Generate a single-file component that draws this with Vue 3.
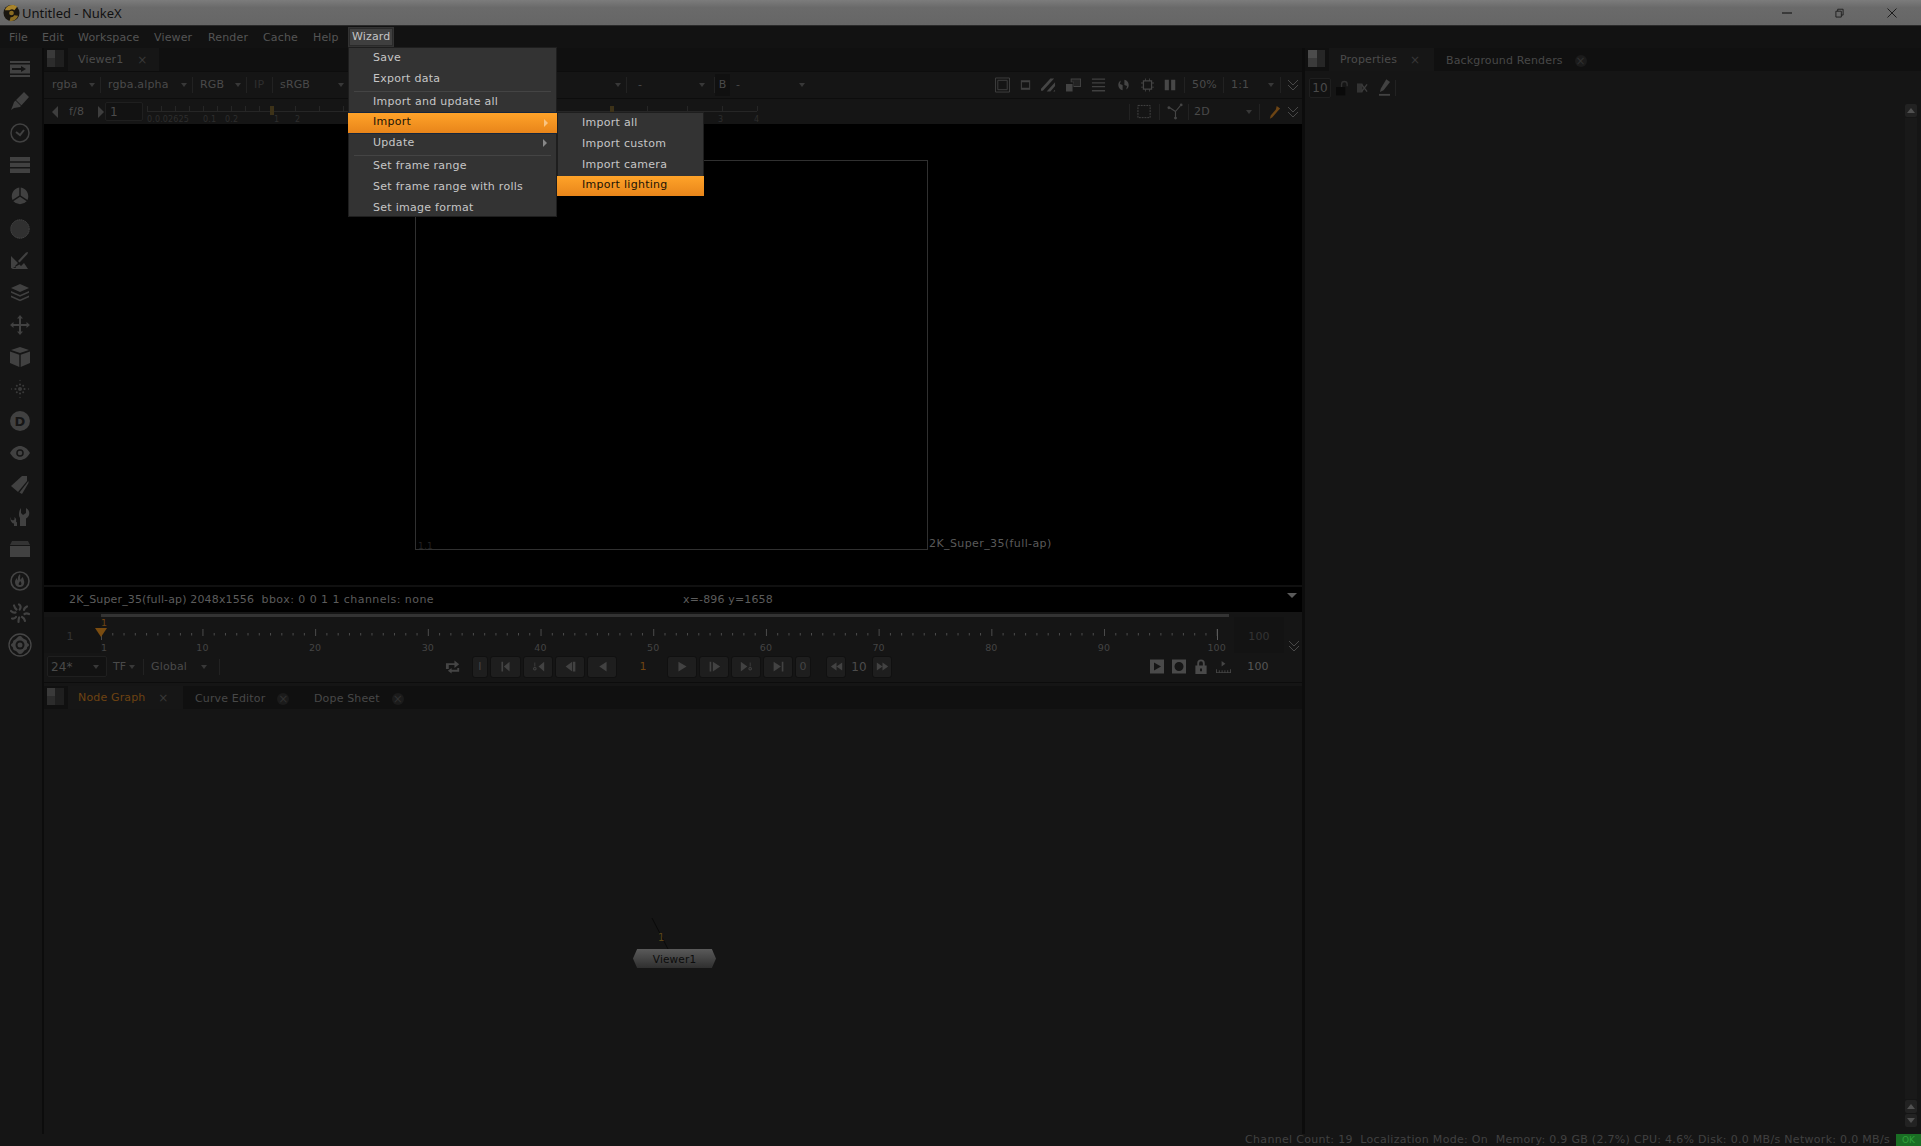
<script setup>
const menuBar = ['File', 'Edit', 'Workspace', 'Viewer', 'Render', 'Cache', 'Help']
const menuWidths = [33, 36, 76, 54, 55, 50, 39]

const ticks = Array.from({ length: 100 }, (_, i) => ({
  x: i * 11.27,
  major: i === 0 || (i + 1) % 10 === 0
}))
const labels = [1, 10, 20, 30, 40, 50, 60, 70, 80, 90, 100].map((f) => ({
  f,
  x: (f - 1) * 11.27 + (f === 1 ? 3 : 0)
}))

const zoomTicks = [0, 14, 28, 42, 56, 70, 84, 98, 112, 124, 148, 172, 196, 238, 300, 380, 465, 500, 540, 575, 610]
const zoomLabels = [
  { t: '0.0.02625', x: 0 },
  { t: '0.1', x: 56 },
  { t: '0.2', x: 78 },
  { t: '1', x: 127 },
  { t: '2', x: 148 },
  { t: '3', x: 571 },
  { t: '4', x: 607 }
]

const backButtons = [
  { w: 31, d: 'M3 2h2v12H3z M13 2v12L6 8z' },
  { w: 30, d: 'M8 8l7-6v12z M3 3h1v5H3z M3.5 8.500a2.200 2.200 0 1 1 0 4.400a2.200 2.200 0 1 1 0-4.400z M3.500 9.700a1 1 0 1 0 0 2a1 1 0 1 0 0-2z' },
  { w: 30, d: 'M2 8l8-6v12z M11 2h3v12h-3z' },
  { w: 30, d: 'M4 8l9-6v12z' }
]
const fwdButtons = [
  { w: 30, d: 'M3 2l10 6-10 6z' },
  { w: 30, d: 'M2 2h2v12H2z M6 2l9 6-9 6z' },
  { w: 30, d: 'M1 2l8 6-8 6z M12 3h1v5h-1z M12.500 8.500a2.200 2.200 0 1 1 0 4.400a2.200 2.200 0 1 1 0-4.400z M12.500 9.700a1 1 0 1 0 0 2a1 1 0 1 0 0-2z' },
  { w: 30, d: 'M2 2l9 6-9 6z M12 2h2v12h-2z' }
]
</script>

<template>
  <div class="app">
    <header class="titlebar">
      <svg class="logo" viewBox="0 0 18 18">
        <circle cx="9" cy="9" r="8.500" fill="#1a1610" />
        <path d="M2 6a8 8 0 0 1 13-3.500L12 6a4 4 0 0 0-5 0z" fill="#a8842c" />
        <path d="M16 12a8 8 0 0 1-9 5.500l1-4a4 4 0 0 0 4-2z" fill="#8a6c22" />
        <circle cx="9" cy="9" r="2.500" fill="#8a6c22" />
      </svg>
      <span class="title">Untitled - NukeX</span>
      <div class="winctl">
        <svg class="win-min" viewBox="0 0 10 10"><path d="M0 5h10" stroke="#1c1c1c" stroke-width="1.200" /></svg>
        <svg class="win-max" viewBox="0 0 10 10"><path d="M1 3h6v6.500H1z M3 3V.8h6v6.500H7" fill="none" stroke="#1c1c1c" stroke-width="1" /></svg>
        <svg class="win-close" viewBox="0 0 10 10"><path d="M.5.5l9 9M9.500.5l-9 9" stroke="#1c1c1c" stroke-width="1" /></svg>
      </div>
    </header>

    <nav class="menubar">
      <span v-for="(m, i) in menuBar" :key="m" class="menubar-item" :style="{ width: menuWidths[i] + 'px' }">{{ m }}</span>
      <span class="menubar-item is-open">Wizard</span>
    </nav>

    <div class="workspace">
      <aside class="sidebar">
        <svg viewBox="0 0 20 16" class="sb"><path d="M0 0h20v2H0z M0 3.500h20v9H0z M0 14h20v2H0z" /><path d="M2 7h9V5l5 3-5 3V9H2z" fill="#151515" /></svg>
        <svg viewBox="0 0 20 20" class="sb"><path d="M14 1l5 5-9 10-6 1-3 2 2-5 1-3z" /><path d="M5.500 9l6 6" stroke="#151515" stroke-width="1" /></svg>
        <svg viewBox="0 0 20 20" class="sb"><circle cx="10" cy="10" r="9" fill="none" stroke="#414141" stroke-width="1.500" /><path d="M6 9l4 3 4-5" fill="none" stroke="#414141" stroke-width="2" /></svg>
        <svg viewBox="0 0 20 16" class="sb"><path d="M0 0h20v4.200H0z M0 5.800h20V10H0z M0 11.600h20V16H0z" /></svg>
        <svg viewBox="0 0 20 20" class="sb"><path d="M9.300.5v8L2.500 13A9 9 0 0 1 9.300.5z M10.700.5a9 9 0 0 1 6.800 12.500l-6.800-4.500z M3.300 14.300l6.700-4.500 6.700 4.500a9 9 0 0 1-13.400 0z" /></svg>
        <svg viewBox="0 0 20 20" class="sb"><circle cx="10" cy="10" r="9.200" fill="#303030" stroke="#484848" stroke-width="1" stroke-dasharray="1.500 .5" /></svg>
        <svg viewBox="0 0 20 20" class="sb"><path d="M1 5l7 7-3 3 1 2h-5z M1 18h17L14 12l-3 3-1.500-1.500z" /><path d="M8 10l8-8.500 2-.5-.5 2-8 8.500z" /></svg>
        <svg viewBox="0 0 20 18" class="sb"><path d="M10 0l9 4-9 4-9-4z M1 7l9 4 9-4v1.800l-9 4-9-4z M1 11.500l9 4 9-4v1.800l-9 4-9-4z" /></svg>
        <svg viewBox="0 0 20 20" class="sb"><path d="M10 0l3 3.500h-2V9h5.500V7L20 10l-3.500 3v-2H11v5.500h2L10 20l-3-3.500h2V11H3.500v2L0 10l3.500-3v2H9V3.500H7z" /></svg>
        <svg viewBox="0 0 20 20" class="sb"><path d="M10 0l9 3-9 3-9-3z" /><path d="M0 4.500l9.300 3.200V20L0 16z" /><path d="M20 4.500l-9.300 3.200V20L20 16z" /></svg>
        <svg viewBox="0 0 20 20" class="sb"><g fill="#3a3a3a"><circle cx="10" cy="10" r="2" /><circle cx="10" cy="5.500" r="1.100" /><circle cx="10" cy="14.500" r="1.100" /><circle cx="5.500" cy="10" r="1.100" /><circle cx="14.500" cy="10" r="1.100" /><circle cx="6.800" cy="6.800" r="1" /><circle cx="13.200" cy="6.800" r="1" /><circle cx="6.800" cy="13.200" r="1" /><circle cx="13.200" cy="13.200" r="1" /><circle cx="10" cy="1.500" r=".7" /><circle cx="10" cy="18.500" r=".7" /><circle cx="1.500" cy="10" r=".7" /><circle cx="18.500" cy="10" r=".7" /></g></svg>
        <svg viewBox="0 0 20 20" class="sb"><circle cx="10" cy="10" r="10" /><text x="10" y="15" text-anchor="middle" class="sb-d">D</text></svg>
        <svg viewBox="0 0 20 14" class="sb"><path d="M0 7C3 2 6.500 0 10 0s7 2 10 7c-3 5-6.500 7-10 7S3 12 0 7z" /><circle cx="10" cy="7" r="3.800" fill="#151515" /><circle cx="10" cy="7" r="2.300" /></svg>
        <svg viewBox="0 0 20 20" class="sb"><path d="M12 1h5v5L8 17 1 11z" /><path d="M18.500 6v2L12 19l-2.500-1.500z" /></svg>
        <svg viewBox="0 0 20 20" class="sb"><path d="M11 1v5l2 2 3-2V1c2.500 1.500 4 4 3 7-.5 2-2 3-3 3.500V19h-6v-8C8.500 9 8.500 4 11 1z" /><path d="M1 10v2.500l2 1 1.500-1V10c1.500 1 2 3 1.500 4.500l1 1V19H4v-2.500C1.500 16.500-.5 12.500 1 10z" /></svg>
        <svg viewBox="0 0 20 16" class="sb"><path d="M2 0h16l2 4H0z" fill="#333" /><path d="M0 5h20v11H0z" /></svg>
        <svg viewBox="0 0 20 20" class="sb"><circle cx="10" cy="10" r="9" fill="none" stroke="#444" stroke-width="1.600" /><path d="M10 3c1 3-1 4 1 6 0-2 1-2 2-3 0 2 2 4 1 7-.5 2-2 3-4 3-3 0-5-2-5-5 0-2 1-3 2-4 0 1.500.5 2 1 2.500C7.500 7 8 5 10 3z" /><path d="M10 9.500c0 2-2 2.500-1 4.500h2c1.200-2-.5-3-1-4.500z" fill="#151515" /></svg>
        <svg viewBox="0 0 20 20" class="sb"><g fill="none" stroke="#414141" stroke-width="2.200" stroke-linecap="round"><path d="M9 1.500c2 1 2 3 .7 5" /><path d="M17 3.500c-2 1-3 1.800-3 3.500" /><path d="M19 11c-2-1-3-1-4.500 0" /><path d="M15 18c-.5-2-1-3-3-4" /><path d="M8.500 19c0-2 0-3 .7-4.500" /><path d="M2 15.500c2 .5 3 0 4-1.500" /><path d="M1 8c1.500 1.500 3 2 4.500 1.500" /><path d="M4 2.500c.5 1.500 1 3 2.500 4" /></g></svg>
        <svg viewBox="0 0 24 24" class="sb sb-big"><circle cx="12" cy="12" r="11" fill="none" stroke="#464646" stroke-width="1.300" /><path d="M12 3c2 0 2 2 4 3s3 1 3 3 2 1 2 3-2 1-2 3-2 1.500-3 3-2 3-4 3-2-2-4-3-3-1-3-3-2-1-2-3 2-1 2-3 2-2 3-3 2-3 4-3z" /><circle cx="12" cy="12" r="4.500" fill="#151515" /><circle cx="12" cy="12" r="2.500" /></svg>
      </aside>

      <div class="center">
        <section class="viewer-pane">
          <div class="tabbar">
            <div class="panel-ico"></div>
            <div class="tab tab-active tab-viewer"><span>Viewer1</span><i class="close">×</i></div>
          </div>

          <div class="toolbar tb-one">
            <div class="tbi tbi-rgba">rgba<b class="caret"></b></div>
            <div class="tbi tbi-alpha">rgba.alpha<b class="caret"></b></div>
            <div class="tbi tbi-rgb">RGB<b class="caret"></b></div>
            <div class="tbi tbi-ip dim">IP</div>
            <div class="tbi tbi-srgb">sRGB<b class="caret"></b></div>
            <div class="tbi tbi-hidden"><b class="caret"></b></div>
            <div class="tbi tbi-dash">-<b class="caret"></b></div>
            <div class="bbox">B</div>
            <div class="tbi tbi-dash2">-<b class="caret"></b></div>
            <div class="tb-right">
              <div class="ti-group">
                <svg viewBox="0 0 16 16" class="ti"><path d="M.5.5h15v15H.5z M3 3h10v10H3z" fill="none" stroke="#404040" /></svg>
                <svg viewBox="0 0 16 16" class="ti ti-n"><path d="M2 2h12v12H2z" fill="none" stroke="#404040" stroke-width="1.500" /><path d="M2 2h12v2H2z M2 12h12v2H2z" fill="#404040" /></svg>
                <svg viewBox="0 0 16 16" class="ti"><path d="M0 12L10 1h4L2 14H0z M6 15L15 5v4l-5 6z M13 15l2-2v2z" fill="#454545" /></svg>
                <svg viewBox="0 0 16 16" class="ti"><path d="M5 1h11v9H8V5H5z M0 7h7v8H0z" fill="#434343" /><path d="M6 2h9v7H8.500V4.500H6z" fill="#232323" /></svg>
                <svg viewBox="0 0 16 16" class="ti"><path d="M1 1h14v1.400H1z M1 5h14v1.400H1z M1 9h14v1.400H1z M1 13.400h14v1.400H1z" fill="#404040" /></svg>
                <svg viewBox="0 0 16 18" class="ti"><path d="M9 0v3a6 6 0 0 1 2 11l1-4-3-1zM7 18v-3A6 6 0 0 1 5 4L4 8l3 1z" fill="#454545" /></svg>
                <svg viewBox="0 0 16 16" class="ti ti-c"><path d="M3 3h10v10H3z" fill="none" stroke="#454545" stroke-width="1.500" /><path d="M5 0h1v3H5z M10 0h1v3h-1z M5 13h1v3H5z M10 13h1v3h-1z M0 5h3v1H0z M0 10h3v1H0z M13 5h3v1h-3z M13 10h3v1h-3z" fill="#454545" /></svg>
                <svg viewBox="0 0 16 16" class="ti ti-p"><path d="M1 1h5.500v14H1z M9.500 1H15v14H9.500z" fill="#474747" /></svg>
              </div>
              <span class="tsep sep-a"></span>
              <span class="tlabel t-50">50%</span>
              <span class="tsep"></span>
              <span class="tlabel t-11">1:1<b class="caret"></b></span>
              <span class="tsep"></span>
              <span class="chev"></span>
            </div>
          </div>

          <div class="toolbar tb-two">
            <b class="tri-left"></b>
            <span class="fstop">f/8</span>
            <b class="tri-right"></b>
            <span class="field field-gain">1</span>
            <svg class="gain-ruler" viewBox="0 0 612 26">
              <path d="M0 12.500H610" stroke="#262626" />
              <path v-for="t in zoomTicks" :key="t" :d="`M${t + .5} 7v5`" stroke="#262626" />
              <rect x="123" y="7" width="4" height="9" fill="#3d3218" />
              <rect x="463" y="7" width="4" height="9" fill="#3d3218" />
              <text v-for="l in zoomLabels" :key="l.t" :x="l.x" y="23" class="gain-label">{{ l.t }}</text>
            </svg>
            <div class="tb-right tb-right-two">
              <span class="tsep"></span>
              <svg viewBox="0 0 16 16" class="ti t2-dash"><path d="M1 1h13v13H1z" fill="none" stroke="#454545" stroke-dasharray="2 1" /></svg>
              <span class="tsep t2-s2"></span>
              <svg viewBox="0 0 18 18" class="ti ti-w"><path d="M9 9L3 5M9 9l5-6M9 9v7" stroke="#454545" stroke-width="1.200" fill="none" /><circle cx="2" cy="5" r="1.500" fill="#454545" /><circle cx="15" cy="2" r="1.500" fill="#454545" /><circle cx="9" cy="16" r="1.500" fill="#454545" /></svg>
              <span class="tsep t2-s3"></span>
              <span class="tlabel t-2d">2D<b class="caret"></b></span>
              <span class="tsep"></span>
              <svg viewBox="0 0 14 16" class="ti ti-e"><path d="M9 1l4 3-3 3-6 7-3 2 1-4 6-7z" fill="#6c4414" /></svg>
              <span class="chev"></span>
            </div>
          </div>

          <div class="viewport">
            <div class="format">
              <span class="format-name">2K_Super_35(full-ap)</span>
              <span class="format-org">1,1</span>
            </div>
          </div>

          <div class="infobar">
            <span class="info-a">2K_Super_35(full-ap) 2048x1556&nbsp; <span class="info-tail">bbox: 0 0 1 1 channels: none</span></span>
            <span class="info-b">x=-896 y=1658</span>
            <b class="info-arrow"></b>
          </div>

          <div class="timeline">
            <div class="tl-bar"></div>
            <div class="tl-row">
              <div class="tl-start">1</div>
              <svg class="tl-ruler" viewBox="0 0 1133 36">
                <g v-for="t in ticks" :key="t.x">
                  <path :d="t.major ? `M${t.x + .5} 12v7` : `M${t.x + .5} 16v2.500`" stroke="#4c4c4c" />
                </g>
                <path d="M1116.500 12v11" stroke="#5a5a5a" />
                <path d="M.5 14v9" stroke="#4a4a4a" />
                <text v-for="l in labels" :key="l.f" :x="l.x" y="34" text-anchor="middle" class="tl-label">{{ l.f }}</text>
                <path d="M-6 11h12l-6 9z" fill="#7a4c10" />
                <text x="3" y="9" text-anchor="middle" class="tl-cur">1</text>
              </svg>
              <div class="tl-end">100</div>
              <span class="chev tl-chev"></span>
            </div>
            <div class="tl-controls">
              <div class="fps">24*<b class="caret"></b></div>
              <span class="tlabel t-tf">TF<b class="caret"></b></span>
              <span class="tsep"></span>
              <span class="tlabel t-global">Global<b class="caret"></b></span>
              <span class="tsep"></span>
              <svg class="loop" viewBox="0 0 18 16"><path d="M1 4h9V1l5 4-5 4V6H4v4H1zM15 9v4H7v2l-4-3 4-3v2h6V9z" fill="#454545" /></svg>
              <div class="tbtn btn-i">I</div>
              <div v-for="b in backButtons" :key="b.d" class="tbtn" :style="{ width: b.w + 'px' }">
                <svg viewBox="0 0 16 16"><path :d="b.d" fill-rule="evenodd" /></svg>
              </div>
              <div class="frame">1</div>
              <div v-for="b in fwdButtons" :key="b.d" class="tbtn" :style="{ width: b.w + 'px' }">
                <svg viewBox="0 0 16 16"><path :d="b.d" fill-rule="evenodd" /></svg>
              </div>
              <div class="tbtn btn-i">0</div>
              <div class="tbtn btn-skip first-skip"><svg viewBox="0 0 16 16"><path d="M1 8l7-5v10z M8 8l7-5v10z" /></svg></div>
              <div class="skip-val">10</div>
              <div class="tbtn btn-skip"><svg viewBox="0 0 16 16"><path d="M1 3l7 5-7 5z M8 3l7 5-7 5z" /></svg></div>
              <div class="tl-right-icons">
                <svg viewBox="0 0 14 14"><path d="M0 0h14v14H0z M4 3v8l7-4z" fill="#4a4a4a" fill-rule="evenodd" /></svg>
                <svg viewBox="0 0 14 14"><path d="M0 0h14v14H0z M7 2.500a4.500 4.500 0 1 0 0 9a4.500 4.500 0 1 0 0-9z" fill="#4a4a4a" fill-rule="evenodd" /></svg>
                <svg viewBox="0 0 14 16"><path d="M3 7V4.500a4 4 0 0 1 8 0V7h2v9H1V7z M5 7h4V4.500a2 2 0 0 0-4 0z M6 10v3h2v-3z" fill="#4a4a4a" fill-rule="evenodd" /></svg>
                <svg viewBox="0 0 16 14" class="in-icon"><path d="M6 1l4 3-4 3z M0 13h16v1H0z M0 10h1v3H0z M3 11h1v2H3z M6 11h1v2H6z M9 11h1v2H9z M12 11h1v2h-1z M15 10h1v3h-1z" fill="#454545" /></svg>
              </div>
              <div class="tl-out">100</div>
            </div>
          </div>
        </section>

        <section class="graph-pane">
          <div class="tabbar">
            <div class="panel-ico"></div>
            <div class="tab tab-active tab-ng"><span class="orange">Node Graph</span><i class="close">×</i></div>
            <div class="tab tab-ce"><span>Curve Editor</span><i class="close dark">×</i></div>
            <div class="tab tab-ds"><span>Dope Sheet</span><i class="close dark">×</i></div>
          </div>
          <div class="graph">
            <svg class="wire" viewBox="0 0 30 40"><path d="M1 0L17 31" stroke="#0a0a0a" stroke-width="1" /></svg>
            <span class="wire-num">1</span>
            <div class="node">Viewer1</div>
          </div>
        </section>
      </div>

      <aside class="props">
        <div class="tabbar">
          <div class="panel-ico light"></div>
          <div class="tab tab-active tab-props"><span>Properties</span><i class="close">×</i></div>
          <div class="tab tab-bg"><span>Background Renders</span><i class="close dark">×</i></div>
        </div>
        <div class="props-tools">
          <span class="field field-ten">10</span>
          <svg viewBox="0 0 14 16" class="ic-lock"><path d="M0 7h10v9H0z" fill="#0a0a0a" /><path d="M6 7V4a3 3 0 0 1 6 0v2" fill="none" stroke="#303030" stroke-width="1.500" /></svg>
          <svg viewBox="0 0 12 10" class="ic-x"><path d="M0 0h6v10H0z" fill="#333" /><path d="M5 1l6 8M11 1L5 9" stroke="#3c3c3c" stroke-width="1.500" /></svg>
          <svg viewBox="0 0 12 18" class="ic-pen"><path d="M8 0l4 3-7 9-4 2 1-4z" fill="#424242" /><path d="M0 16h12v2H0z" fill="#424242" /></svg>
          <span class="tsep"></span>
        </div>
        <div class="props-body">
          <div class="scroll">
            <div class="scroll-btn"><b class="up"></b></div>
            <div class="scroll-track"></div>
            <div class="scroll-btn"><b class="up"></b></div>
            <div class="scroll-btn"><b class="down"></b></div>
          </div>
        </div>
      </aside>
    </div>

    <footer class="statusbar">
      <span>Channel Count: 19&nbsp; Localization Mode: On&nbsp; Memory: 0.9 GB (2.7%) CPU: 4.6% Disk: 0.0 MB/s Network: 0.0 MB/s</span>
      <span class="ok">OK</span>
    </footer>

    <div class="menu menu-main">
      <div class="mi">Save</div>
      <div class="mi">Export data</div>
      <div class="msep"></div>
      <div class="mi">Import and update all</div>
      <div class="mi mi-on">Import<b class="mi-arrow light"></b></div>
      <div class="mi">Update<b class="mi-arrow"></b></div>
      <div class="msep"></div>
      <div class="mi">Set frame range</div>
      <div class="mi">Set frame range with rolls</div>
      <div class="mi">Set image format</div>
    </div>
    <div class="menu menu-sub">
      <div class="mi">Import all</div>
      <div class="mi">Import custom</div>
      <div class="mi">Import camera</div>
      <div class="mi mi-on">Import lighting</div>
    </div>
  </div>
</template>

<style>
html, body { margin: 0; background: #141414; }
</style>

<style scoped>
.app {
  position: relative;
  width: 1921px;
  height: 1146px;
  overflow: hidden;
  display: flex;
  flex-direction: column;
  background: #151515;
  color: #5a5a5a;
  font-family: "DejaVu Sans", sans-serif;
  font-size: 11px;
  letter-spacing: .15px;
}

/* title bar */
.titlebar {
  height: 25px;
  flex: none;
  display: flex;
  align-items: center;
  background: linear-gradient(#7c7c7c, #6a6a6a 30%, #666);
  border-bottom: 1px solid #2a2a2a;
  color: #111;
}
.logo { width: 17px; height: 18px; margin-left: 3px; }
.title { font: 13px "Noto Sans", sans-serif; margin-left: 2px; letter-spacing: 0; }
.winctl { margin-left: auto; display: flex; align-items: center; padding-right: 24px; }
.win-min { width: 10px; height: 10px; }
.win-max { width: 9px; height: 10px; margin-left: 43px; }
.win-close { width: 10px; height: 10px; margin-left: 43px; }

/* menu bar */
.menubar {
  height: 22px;
  flex: none;
  display: flex;
  align-items: center;
  padding-left: 9px;
  background: #121212;
  box-sizing: border-box;
}
.menubar-item { color: #555; flex: none; }
.menubar-item.is-open {
  color: #c4c4c4;
  background: #3f3f3f;
  margin-left: -4px;
  padding: 2px 3px;
  line-height: 14px;
  box-shadow: 0 0 0 1px #2a2a2a inset;
  border: 1px solid #333;
}

/* workspace */
.workspace { flex: 1; min-height: 0; display: flex; }
.sidebar {
  width: 42px;
  flex: none;
  box-sizing: border-box;
  display: flex;
  flex-direction: column;
  align-items: center;
  padding: 5px 2px 0 0;
  background: #151515;
}
.sb { width: 20px; height: 32px; fill: #414141; display: block; }
.sb-big { width: 24px; }
.sb-d { font: bold 13px "DejaVu Sans", sans-serif; fill: #151515; }

.center {
  width: 1258px;
  flex: none;
  display: flex;
  flex-direction: column;
  border-left: 2px solid #0c0c0c;
  border-right: 3px solid #0c0c0c;
}
.tabbar {
  height: 23px;
  flex: none;
  display: flex;
  background: #101010;
  padding-left: 3px;
}
.panel-ico {
  width: 17px;
  height: 17px;
  margin-top: 2px;
  background:
    linear-gradient(90deg, transparent 8px, #1f1f1f 8px),
    linear-gradient(#3a3a3a 50%, #2c2c2c 50%);
  margin-right: 4px;
}
.panel-ico.light {
  background:
    linear-gradient(90deg, transparent 9px, #262626 9px),
    linear-gradient(#4c4c4c 50%, #3b3b3b 50%);
}
.tab {
  display: flex;
  align-items: center;
  box-sizing: border-box;
  color: #484848;
}
.tab span { flex: none; }
.tab-active { background: #161616; color: #4c4c4c; }
.tab-viewer { width: 91px; padding-left: 10px; }
.tab-viewer .close { margin-left: 13px; }
.tab-ng { width: 115px; padding-left: 10px; }
.tab-ng .close { margin-left: 12px; }
.tab-ce { width: 118px; padding-left: 12px; padding-top: 2px; }
.tab-ce .close { margin-left: 12px; }
.tab-ds { width: 116px; padding-left: 13px; padding-top: 2px; }
.tab-ds .close { margin-left: 12px; }
.tab-props { width: 105px; padding-left: 11px; }
.tab-props .close { margin-left: 12px; }
.tab-bg { width: 166px; padding-left: 12px; padding-top: 2px; }
.tab-bg .close { margin-left: 12px; }
.orange { color: #6e4312; }
.close {
  font: normal 12px/12px "DejaVu Sans", sans-serif;
  color: #383838;
  width: 12px;
  height: 12px;
  text-align: center;
  flex: none;
}
.close.dark { background: #1b1b1b; border-radius: 6px; color: #303030; }

.toolbar {
  flex: none;
  box-sizing: border-box;
  display: flex;
  align-items: center;
  background: #151515;
  border-top: 1px solid #0d0d0d;
}
.tb-one { height: 27px; }
.tbi {
  position: relative;
  height: 16px;
  line-height: 16px;
  flex: none;
  box-sizing: border-box;
  padding-left: 7px;
  border-right: 1px solid #222;
  color: #4a4a4a;
}
.tbi-rgba { width: 57px; padding-left: 8px; }
.tbi-alpha { width: 92px; }
.tbi-rgb { width: 54px; }
.tbi-ip { width: 26px; }
.tbi-srgb { width: 77px; }
.tbi-hidden { width: 277px; }
.tbi-dash { width: 88px; padding-left: 11px; }
.tbi-dash .caret { right: 9px; }
.bbox {
  width: 15px;
  height: 22px;
  line-height: 22px;
  text-align: center;
  background: #101010;
  flex: none;
  color: #4a4a4a;
}
.tbi-dash2 { width: 80px; padding-left: 6px; border-right: 0; }
.tbi-dash2 .caret { right: 5px; }
.dim { color: #2e2e2e; }
.caret {
  position: absolute;
  right: 5px;
  top: 6px;
  width: 0;
  height: 0;
  border: 3px solid transparent;
  border-top: 4px solid #383838;
  border-bottom: 0;
}
.tb-right {
  margin-left: auto;
  display: flex;
  align-items: center;
  padding-right: 4px;
}
.ti-group { display: flex; align-items: center; gap: 10px; flex: none; }
.ti { width: 15px; height: 16px; flex: none; display: block; }
.ti-n { width: 11px; }
.ti-c { width: 13px; }
.ti-p { width: 12px; }
.ti-w { width: 17px; height: 17px; margin-left: 7px; }
.ti-e { width: 12px; height: 16px; margin-left: 9px; }
.tsep { width: 1px; height: 16px; background: #222; flex: none; }
.sep-a { margin-left: 8px; }
.tlabel { position: relative; color: #4a4a4a; flex: none; line-height: 16px; }
.t-50 { width: 31px; margin-left: 7px; }
.t-11 { width: 49px; margin-left: 7px; }
.t-11 .caret { right: 6px; }
.chev {
  width: 10px;
  height: 10px;
  flex: none;
  position: relative;
  margin-left: 7px;
  background:
    linear-gradient(45deg, transparent 46%, #484848 46%, #484848 58%, transparent 58%) 0 0 / 5px 5px no-repeat,
    linear-gradient(-45deg, transparent 46%, #484848 46%, #484848 58%, transparent 58%) 5px 0 / 5px 5px no-repeat,
    linear-gradient(45deg, transparent 46%, #484848 46%, #484848 58%, transparent 58%) 0 5px / 5px 5px no-repeat,
    linear-gradient(-45deg, transparent 46%, #484848 46%, #484848 58%, transparent 58%) 5px 5px / 5px 5px no-repeat;
}

.tb-two { height: 26px; padding-left: 8px; }
.tri-left, .tri-right { width: 0; height: 0; border: 6px solid transparent; flex: none; }
.tri-left { border-right: 6px solid #3e3e3e; border-left: 0; }
.tri-right { border-left: 6px solid #3e3e3e; border-right: 0; margin-left: 1px; }
.fstop { width: 28px; margin-left: 11px; flex: none; color: #4a4a4a; }
.field {
  box-sizing: border-box;
  background: #121212;
  border: 1px solid #1f1f1f;
  border-radius: 2px;
  flex: none;
  color: #4a4a4a;
  font-size: 12px;
}
.field-gain { width: 38px; height: 19px; line-height: 18px; padding-left: 4px; margin-left: 1px; }
.gain-ruler { width: 612px; height: 26px; margin-left: 4px; flex: none; }
.gain-label { font: 8px "DejaVu Sans", sans-serif; fill: #2e2e2e; }
.t2-dash { margin-left: 7px; }
.t2-s2 { margin-left: 7px; }
.t2-s3 { margin-left: 4px; }
.t-2d { width: 65px; margin-left: 5px; }
.t-2d .caret { right: 7px; }
.tb-right-two .chev { margin-left: 7px; }

.viewport { height: 461px; flex: none; background: #000; position: relative; }
.format {
  position: absolute;
  left: 371px;
  top: 36px;
  width: 511px;
  height: 388px;
  border: 1px solid #303030;
}
.format-name {
  position: absolute;
  left: 513px;
  bottom: -1px;
  color: #5a5a5a;
  white-space: nowrap;
  letter-spacing: .4px;
}
.format-org {
  position: absolute;
  left: 2px;
  bottom: -2px;
  color: #222;
  font-size: 9px;
}

.infobar {
  height: 27px;
  flex: none;
  box-sizing: border-box;
  background: #000;
  border-top: 2px solid #101010;
  display: flex;
  align-items: center;
  position: relative;
  color: #5c5c5c;
}
.info-a { margin-left: 25px; white-space: nowrap; }
.info-tail { letter-spacing: .45px; }
.info-b { position: absolute; left: 639px; }
.info-arrow {
  position: absolute;
  right: 5px;
  top: 6px;
  width: 0;
  height: 0;
  border: 5px solid transparent;
  border-top: 5px solid #5a5a5a;
  border-bottom: 0;
}

.timeline { flex: none; height: 71px; background: #151515; display: flex; flex-direction: column; border-bottom: 1px solid #0c0c0c; box-sizing: border-box; }
.tl-bar {
  height: 3px;
  margin: 2px 73px 0 57px;
  background: #333;
  flex: none;
}
.tl-row { height: 36px; flex: none; display: flex; }
.tl-start {
  width: 57px;
  flex: none;
  box-sizing: border-box;
  padding-right: 5px;
  background: #131313;
  color: #333;
  text-align: center;
  line-height: 40px;
}
.tl-ruler { width: 1133px; height: 36px; flex: none; overflow: visible; }
.tl-label { font: 9.500px "DejaVu Sans", sans-serif; fill: #444; }
.tl-cur { font: 9.500px "DejaVu Sans", sans-serif; fill: #6e4312; }
.tl-end {
  width: 50px;
  flex: none;
  background: #131313;
  color: #333;
  text-align: center;
  line-height: 40px;
}
.tl-chev { margin: 24px 0 0 5px; }
.tl-controls {
  height: 23px;
  margin-top: 2px;
  flex: none;
  display: flex;
  align-items: center;
  padding-left: 3px;
}
.fps {
  position: relative;
  width: 60px;
  height: 21px;
  line-height: 21px;
  box-sizing: border-box;
  padding-left: 3px;
  background: #121212;
  border: 1px solid #1f1f1f;
  border-radius: 2px;
  color: #4a4a4a;
  flex: none;
  font-size: 12px;
}
.fps .caret { right: 7px; top: 8px; }
.t-tf { width: 30px; margin-left: 6px; }
.t-tf .caret { right: 8px; }
.t-global { width: 68px; margin-left: 7px; }
.t-global .caret { right: 12px; }
.loop { width: 17px; height: 16px; margin-left: 225px; margin-right: 10px; flex: none; }
.tbtn {
  height: 22px;
  box-sizing: border-box;
  background: #1e1e1e;
  border: 1px solid #101010;
  border-radius: 3px;
  margin-right: 2px;
  display: flex;
  align-items: center;
  justify-content: center;
  flex: none;
  color: #444;
}
.tbtn svg { width: 13px; height: 13px; fill: #424242; }
.btn-i { width: 16px; }
.frame { width: 48px; text-align: center; color: #6e4312; flex: none; }
.btn-skip { width: 20px; }
.first-skip { margin-left: 13px; }
.skip-val { width: 22px; text-align: center; color: #4c4c4c; flex: none; margin-right: 2px; font-size: 12px; }
.tl-right-icons { display: flex; gap: 8px; align-items: center; margin-left: 256px; flex: none; }
.tl-right-icons svg { width: 14px; height: 15px; display: block; }
.tl-right-icons .in-icon { width: 15px; }
.tl-out { width: 50px; text-align: center; color: #555; margin-left: 2px; flex: none; }

.viewer-pane { flex: none; display: flex; flex-direction: column; height: 635px; }
.graph-pane {
  flex: 1;
  display: flex;
  flex-direction: column;
  margin-top: 3px;
  min-height: 0;
}
.graph { flex: 1; background: #151515; position: relative; }
.wire { position: absolute; left: 607px; top: 209px; width: 30px; height: 40px; }
.wire-num { position: absolute; left: 614px; top: 223px; color: #5a4518; font-size: 10px; }
.node {
  position: absolute;
  left: 589px;
  top: 240px;
  width: 83px;
  height: 19px;
  line-height: 21px;
  text-align: center;
  color: #0c0c0c;
  font-size: 10.500px;
  background: linear-gradient(#5a5a5a, #2f2f2f);
  clip-path: polygon(5% 0, 95% 0, 100% 50%, 95% 100%, 5% 100%, 0 50%);
}

.props { flex: 1; min-width: 0; display: flex; flex-direction: column; background: #151515; }
.props-tools {
  height: 33px;
  box-sizing: border-box;
  flex: none;
  display: flex;
  align-items: center;
  padding: 0 0 0 4px;
}
.field-ten { width: 22px; height: 20px; line-height: 19px; text-align: center; }
.ic-lock { width: 13px; height: 16px; margin-left: 5px; flex: none; }
.ic-x { width: 11px; height: 10px; margin-left: 8px; flex: none; }
.ic-pen { width: 11px; height: 17px; margin-left: 11px; flex: none; }
.props-tools .tsep { margin-left: 5px; }
.props-body { flex: 1; position: relative; display: flex; justify-content: flex-end; padding-right: 4px; min-height: 0; }
.scroll {
  width: 12px;
  display: flex;
  flex-direction: column;
  gap: 1px;
  height: 1023px;
}
.scroll-btn {
  height: 13px;
  flex: none;
  background: #222;
  border-radius: 2px;
  display: flex;
  align-items: center;
  justify-content: center;
}
.scroll-track { flex: 1; background: #191919; }
.up, .down { width: 0; height: 0; border: 4px solid transparent; }
.up { border-bottom: 5px solid #505050; border-top: 0; }
.down { border-top: 5px solid #505050; border-bottom: 0; }

.statusbar {
  height: 12px;
  flex: none;
  display: flex;
  align-items: center;
  justify-content: flex-end;
  color: #414141;
  background: #151515;
  line-height: 12px;
  white-space: nowrap;
  letter-spacing: .3px;
}
.ok {
  width: 25px;
  margin-left: 6px;
  height: 12px;
  background: #1a6e24;
  color: #2fa03a;
  text-align: center;
  font-size: 9px;
  letter-spacing: 0;
}

/* menus */
.menu {
  position: absolute;
  box-sizing: border-box;
  background: #333;
  border: 1px solid #1e1e1e;
  color: #c6c6c6;
  z-index: 5;
}
.menu-main { left: 348px; top: 47px; width: 209px; height: 170px; }
.menu-sub { left: 557px; top: 112px; width: 147px; height: 82px; }
.mi {
  position: relative;
  height: 21px;
  line-height: 19px;
  padding-left: 24px;
  white-space: nowrap;
  letter-spacing: .28px;
}
.msep { height: 1px; margin: 1px 5px 0; background: #444; }
.mi-on {
  background: linear-gradient(#ffa329, #e8851a);
  color: #1b1305;
  height: 20px;
  line-height: 18px;
  margin: 0 -1px;
  padding-left: 25px;
  box-shadow: 0 -1px 0 #16263c, 0 1px 0 #16263c;
}
.menu-sub .mi-on { box-shadow: none; }
.mi-arrow {
  position: absolute;
  right: 9px;
  top: 6px;
  width: 0;
  height: 0;
  border: 4px solid transparent;
  border-left: 4px solid #888;
  border-right: 0;
}
.mi-arrow.light { border-left-color: #f9c482; }
</style>
